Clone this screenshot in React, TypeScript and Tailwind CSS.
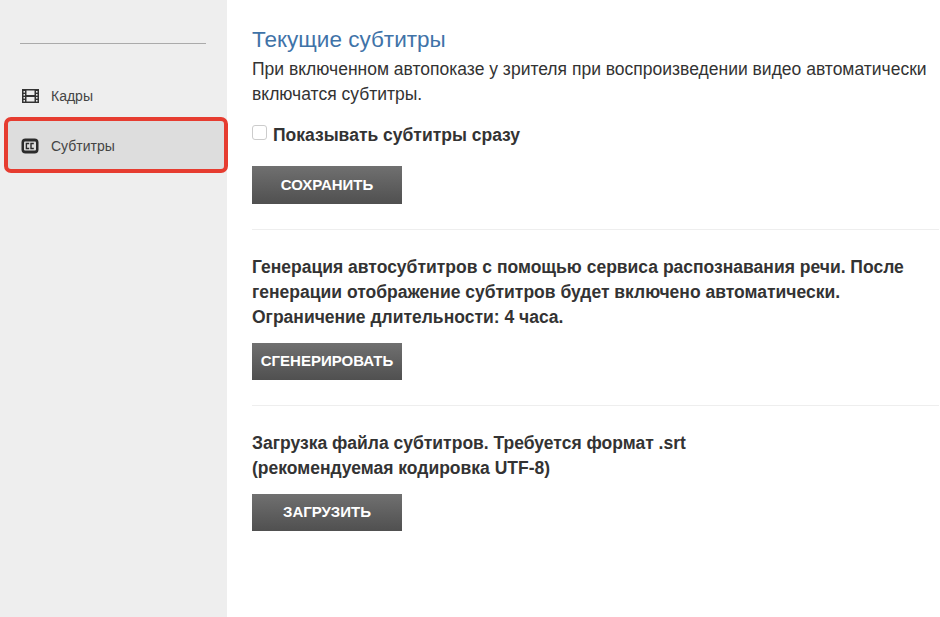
const Btn = ({ label, h }: { label: string; h: string }) => (
  <div className={`w-[150px] ${h} flex items-center justify-center text-white font-bold text-[15px] bg-gradient-to-b from-[#707070] to-[#505050] whitespace-nowrap`}>
    {label}
  </div>
);

const Film = () => (
  <svg width="17" height="16" viewBox="0 0 17 16" className="shrink-0">
    <rect x="0" y="1" width="17" height="14" fill="#333" />
    <rect x="4.5" y="2.5" width="8" height="4.5" fill="#eee" />
    <rect x="4.5" y="9" width="8" height="4.5" fill="#eee" />
    <rect x="1.5" y="3" width="1.5" height="1.6" fill="#eee" />
    <rect x="1.5" y="6" width="1.5" height="1.6" fill="#eee" />
    <rect x="1.5" y="9" width="1.5" height="1.6" fill="#eee" />
    <rect x="1.5" y="12" width="1.5" height="1.6" fill="#eee" />
    <rect x="14" y="3" width="1.5" height="1.6" fill="#eee" />
    <rect x="14" y="6" width="1.5" height="1.6" fill="#eee" />
    <rect x="14" y="9" width="1.5" height="1.6" fill="#eee" />
    <rect x="14" y="12" width="1.5" height="1.6" fill="#eee" />
  </svg>
);

const CC = () => (
  <svg width="18" height="16" viewBox="0 0 18 16" className="shrink-0">
    <rect x="0.5" y="0.5" width="17" height="15" rx="4" fill="#2b2b2b" />
    <rect x="3" y="3.5" width="12" height="9" rx="1" fill="#ddd" />
    <path d="M8.2 5.5H5.4V10.5H8.2M12.8 5.5H10V10.5H12.8" fill="none" stroke="#2b2b2b" strokeWidth="1.4" />
  </svg>
);

export default function App() {
  return (
    <div className="w-[940px] h-[617px] flex bg-white overflow-hidden text-[#333] font-['Liberation_Sans',Arial,sans-serif]">
      <aside className="w-[227px] shrink-0 bg-[#eeeeee] flex flex-col pt-[43px]">
        <div className="h-px bg-[#aaaaaa] ml-[20px] mr-[21px]" />
        <div className="h-[50px] mt-[27px] flex items-center pl-[22px] gap-[12px] text-[14px] text-[#444]">
          <Film />
          <span>Кадры</span>
        </div>
        <div className="w-[224px] h-[56px] ml-[4px] mt-[-4px] pt-[2px] rounded-[7px] border-[4px] border-[#e63c30] bg-[#dddddd] flex items-center pl-[13px] gap-[12px] text-[14px] text-[#444]">
          <CC />
          <span>Субтитры</span>
        </div>
      </aside>
      <main className="flex-1 pl-[25px] pr-px min-w-0">
        <h1 className="text-[22.5px] leading-[26px] text-[#3f73a8] mt-[27px]">Текущие субтитры</h1>
        <div className="text-[17.5px] leading-[25px] mt-[4px] whitespace-nowrap">
          <p>При включенном автопоказе у зрителя при воспроизведении видео автоматически</p>
          <p>включатся субтитры.</p>
        </div>
        <div className="flex items-center mt-[14px] h-[28px]">
          <span className="w-[15px] h-[15px] rounded-[3px] border border-[#cccccc] bg-white mr-[6px] mb-[5px]" />
          <span className="text-[17.5px] font-bold">Показывать субтитры сразу</span>
        </div>
        <div className="mt-[17px]"><Btn label="СОХРАНИТЬ" h="h-[38px]" /></div>
        <div className="h-px bg-[#eeeeee] mt-[25px]" />
        <div className="mt-[25px] text-[17.5px] leading-[25px] font-bold whitespace-nowrap">
          <div>Генерация автосубтитров с помощью сервиса распознавания речи. После</div>
          <div>генерации отображение субтитров будет включено автоматически.</div>
          <div>Ограничение длительности: 4 часа.</div>
        </div>
        <div className="mt-[13px]"><Btn label="СГЕНЕРИРОВАТЬ" h="h-[37px]" /></div>
        <div className="h-px bg-[#eeeeee] mt-[25px]" />
        <div className="mt-[25px] text-[17.5px] leading-[25px] font-bold whitespace-nowrap">
          <div>Загрузка файла субтитров. Требуется формат .srt</div>
          <div>(рекомендуемая кодировка UTF-8)</div>
        </div>
        <div className="mt-[13px]"><Btn label="ЗАГРУЗИТЬ" h="h-[37px]" /></div>
      </main>
    </div>
  );
}
